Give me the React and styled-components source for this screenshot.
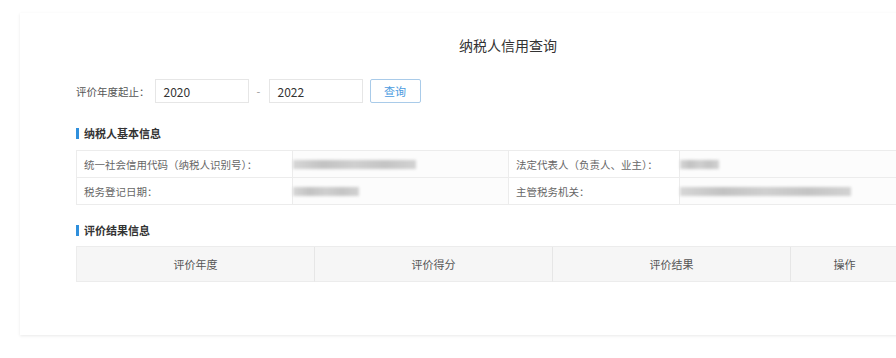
import React from 'react';
import styled, { createGlobalStyle } from 'styled-components';

const GlobalStyle = createGlobalStyle`
  html, body {
    margin: 0;
    padding: 0;
    background: #fff;
  }
  body {
    font-family: "Microsoft YaHei", "Noto Sans CJK SC", "Noto Sans", sans-serif;
    overflow: hidden;
  }
`;

const Page = styled.div`
  width: 896px;
  height: 358px;
  overflow: hidden;
  padding: 13px 0 0 20px;
  box-sizing: border-box;
`;

const Card = styled.div`
  width: 1000px;
  background: #fff;
  box-shadow: 0 1px 3px rgba(0, 0, 0, 0.09);
  padding: 22px 0 53px;
  box-sizing: border-box;
`;

const Title = styled.div`
  width: 976px;
  text-align: center;
  font-size: 14px;
  line-height: 20px;
  color: #333;
`;

const Body = styled.div`
  padding-left: 56px;
  width: 823px;
`;

const QueryRow = styled.div`
  display: flex;
  align-items: center;
  height: 24px;
  margin-top: 24px;
`;

const Label = styled.span`
  font-size: 10.5px;
  color: #555;
  margin-right: 5px;
`;

const YearInput = styled.div`
  width: 94px;
  height: 24px;
  box-sizing: border-box;
  border: 1px solid #e6e6e6;
  padding-left: 8px;
  display: flex;
  align-items: center;
  font-size: 12px;
  color: #333;
`;

const Dash = styled.span`
  width: 20px;
  text-align: center;
  color: #999;
  font-size: 11px;
`;

const QueryButton = styled.button`
  margin-left: 7px;
  width: 51px;
  height: 24px;
  background: #fff;
  border: 1px solid #a9cbe9;
  border-radius: 2px;
  color: #4b9be0;
  font-family: inherit;
  font-size: 11px;
  padding: 0;
`;

const SectionTitle = styled.div`
  display: flex;
  align-items: center;
  margin-top: ${(p) => p.$top}px;
  height: 16px;
  font-size: 11px;
  font-weight: bold;
  color: #333;

  &::before {
    content: '';
    width: 3px;
    height: 11px;
    background: #2f8fdc;
    margin-right: 5px;
  }
`;

const InfoGrid = styled.div`
  display: grid;
  grid-template-columns: 216px 216px 171px 1fr;
  margin-top: 9px;
  border-top: 1px solid #ececec;
  border-left: 1px solid #ececec;
`;

const Cell = styled.div`
  height: 27px;
  box-sizing: border-box;
  border-right: 1px solid #ececec;
  border-bottom: 1px solid #ececec;
  display: flex;
  align-items: center;
  padding-left: ${(p) => (p.$value ? 0 : 7)}px;
  font-size: 10.5px;
  color: #666;
  background: ${(p) => (p.$value ? '#fcfcfc' : '#fff')};
`;

const Blurred = styled.div`
  height: 9px;
  background: linear-gradient(90deg, #d6d6d6, #c2c2c2 25%, #cfcfcf 50%, #c4c4c4 75%, #d2d2d2);
  filter: blur(1.8px);
  margin-top: 1px;
`;

const ResultHeader = styled.div`
  display: grid;
  grid-template-columns: 238px 238px 238px 1fr;
  margin-top: 8px;
  border-top: 1px solid #ececec;
  border-left: 1px solid #ececec;
  background: #f6f6f6;
`;

const HeadCell = styled.div`
  height: 35px;
  box-sizing: border-box;
  border-right: 1px solid #e6e6e6;
  border-bottom: 1px solid #ececec;
  display: flex;
  align-items: center;
  justify-content: center;
  font-size: 11px;
  color: #555;
`;

const info = [
  ['统一社会信用代码（纳税人识别号）：', 123, '法定代表人（负责人、业主）：', 39],
  ['税务登记日期：', 66, '主管税务机关：', 171],
];

export default function App() {
  return (
    <>
      <GlobalStyle />
      <Page>
        <Card>
          <Title>纳税人信用查询</Title>
          <Body>
            <QueryRow>
              <Label>评价年度起止：</Label>
              <YearInput>2020</YearInput>
              <Dash>-</Dash>
              <YearInput>2022</YearInput>
              <QueryButton>查询</QueryButton>
            </QueryRow>

            <SectionTitle $top={22}>纳税人基本信息</SectionTitle>
            <InfoGrid>
              {info.map(([l1, w1, l2, w2]) => (
                <React.Fragment key={l1}>
                  <Cell>{l1}</Cell>
                  <Cell $value>
                    <Blurred style={{ width: w1 }} />
                  </Cell>
                  <Cell>{l2}</Cell>
                  <Cell $value>
                    <Blurred style={{ width: w2 }} />
                  </Cell>
                </React.Fragment>
              ))}
            </InfoGrid>

            <SectionTitle $top={17}>评价结果信息</SectionTitle>
            <ResultHeader>
              <HeadCell>评价年度</HeadCell>
              <HeadCell>评价得分</HeadCell>
              <HeadCell>评价结果</HeadCell>
              <HeadCell>操作</HeadCell>
            </ResultHeader>
          </Body>
        </Card>
      </Page>
    </>
  );
}
